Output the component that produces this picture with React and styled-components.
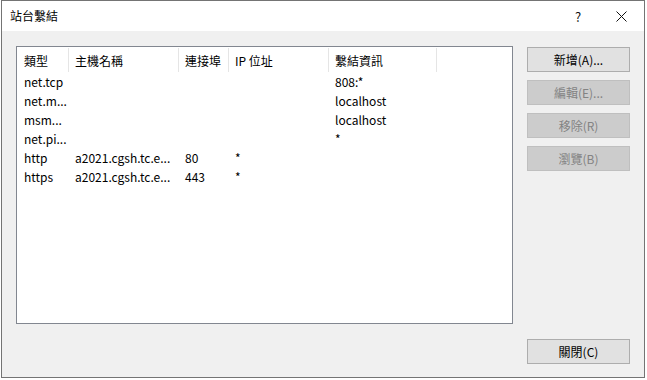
import React from "react"
import styled, { createGlobalStyle } from "styled-components"

const GlobalStyle = createGlobalStyle`
  body {
    margin: 0;
    background: #fff;
    font-family: "Noto Sans CJK TC", "Noto Sans", sans-serif;
    font-size: 12px;
    color: #000;
  }
`;

const columns = [
  { title: "類型", width: 52 },
  { title: "主機名稱", width: 110 },
  { title: "連接埠", width: 50 },
  { title: "IP 位址", width: 100 },
  { title: "繫結資訊", width: 108 }
];

// bindings as the list view shows them (already cut with ...)
const bindings = [
  ["net.tcp", "", "", "", "808:*"],
  ["net.m...", "", "", "", "localhost"],
  ["msm...", "", "", "", "localhost"],
  ["net.pi...", "", "", "", "*"],
  ["http", "a2021.cgsh.tc.e...", "80", "*", ""],
  ["https", "a2021.cgsh.tc.e...", "443", "*", ""]
];

const Window = styled.div`
  margin-left: 1px;
  width: 644px;
  height: 378px;
  box-sizing: border-box;
  border: 1px solid #747474;
  display: flex;
  flex-direction: column;
`;

const TitleBar = styled.div`
  height: 30px;
  background: #fff;
  display: flex;
  align-items: center;
  padding-left: 8px;
`;

const Title = styled.div`
  flex: 1;
  padding-bottom: 1px;
`;

const CaptionButton = styled.div`
  width: 46px;
  height: 30px;
  box-sizing: border-box;
  padding-left: ${p => p.shift || 0}px;
  display: flex;
  align-items: center;
  justify-content: center;
  font-size: 13px;
  color: #111;
`;

const Body = styled.div`
  flex: 1;
  background: #f0f0f0;
  padding: 15px 14px 13px 14px;
  display: grid;
  grid-template-columns: 1fr 103px;
  grid-template-rows: 1fr 25px;
  column-gap: 14px;
  row-gap: 15px;
`;

const ListView = styled.div`
  background: #fff;
  border: 1px solid #828790;
  box-sizing: border-box;
`;

const Row = styled.div`
  display: flex;
  height: ${p => (p.header ? 25 : 19)}px;
  align-items: center;
`;

const Cell = styled.div`
  width: ${p => p.w}px;
  box-sizing: border-box;
  padding-left: ${p => (p.first ? 7 : 6)}px;
  white-space: nowrap;
  overflow: hidden;
  height: 100%;
  display: flex;
  align-items: center;
`;

const HeaderCell = styled(Cell)`
  border-right: 1px solid #e5e5e5;
  height: 24px;
  margin-top: 1px;
`;

const ButtonColumn = styled.div`
  display: flex;
  flex-direction: column;
  gap: 8px;
  padding-top: 1px;
`;

const Button = styled.div`
  height: 25px;
  box-sizing: border-box;
  display: flex;
  align-items: center;
  justify-content: center;
  background: ${p => (p.disabled ? "#cccccc" : "#e1e1e1")};
  border: 1px solid ${p => (p.disabled ? "#bfbfbf" : "#adadad")};
  color: ${p => (p.disabled ? "#838383" : "#000")};
`;

const CloseButton = styled(Button)`
  grid-column: 2;
`;

const CloseIcon = () => (
  <svg width="11" height="11" viewBox="0 0 11 11">
    <path d="M0.5 0.5 L10.5 10.5 M10.5 0.5 L0.5 10.5" stroke="#111" strokeWidth="1" fill="none" />
  </svg>
);

const App = () => (
  <>
    <GlobalStyle />
    <Window>
      <TitleBar>
        <Title>站台繫結</Title>
        <CaptionButton shift={6}>?</CaptionButton>
        <CaptionButton><CloseIcon /></CaptionButton>
      </TitleBar>
      <Body>
        <ListView>
          <Row header>
            {columns.map((col, j) => (
              <HeaderCell key={col.title} w={col.width} first={j === 0}>{col.title}</HeaderCell>
            ))}
          </Row>
          {bindings.map((b, i) => (
            <Row key={i}>
              {b.map((text, j) => (
                <Cell key={j} w={columns[j].width} first={j === 0}>{text}</Cell>
              ))}
            </Row>
          ))}
        </ListView>
        <ButtonColumn>
          <Button>新增(A)...</Button>
          <Button disabled>編輯(E)...</Button>
          <Button disabled>移除(R)</Button>
          <Button disabled>瀏覽(B)</Button>
        </ButtonColumn>
        <CloseButton>關閉(C)</CloseButton>
      </Body>
    </Window>
  </>
)

export default App
